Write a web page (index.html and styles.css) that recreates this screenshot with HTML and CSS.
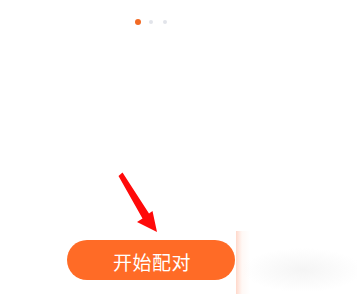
FILE: index.html
```html
<!DOCTYPE html>
<html>
<head>
<meta charset="utf-8">
<link rel="stylesheet" href="styles.css">
</head>
<body>
<div class="page">
  <div class="dots">
    <span class="dot active"></span>
    <span class="dot"></span>
    <span class="dot last"></span>
  </div>
  <div class="actions">
    <button class="start">开始配对</button>
    <div class="ghost"></div>
  </div>
  <svg class="arrow" width="357" height="294" viewBox="0 0 357 294">
    <polygon points="118.5,176 122.5,172.5 149,213.5 152.5,211 157,232 137,222 142.5,218.5" fill="#ff0a0a"/>
  </svg>
</div>
</body>
</html>
```
FILE: styles.css
```css
html, body {
  margin: 0;
  padding: 0;
  background: #ffffff;
}
.page {
  position: relative;
  width: 357px;
  height: 294px;
  display: flex;
  flex-direction: column;
  overflow: hidden;
  font-family: "Noto Sans CJK SC", "Noto Sans", sans-serif;
}
.dots {
  display: flex;
  align-items: center;
  padding-left: 135px;
  margin-top: 19px;
  height: 6px;
}
.dot {
  width: 4px;
  height: 4px;
  border-radius: 50%;
  background: #e2e4ea;
  margin-left: 8px;
}
.dot.last {
  margin-left: 10px;
}
.dot.active {
  width: 6px;
  height: 6px;
  margin-left: 0;
  background: #f26a24;
}
.actions {
  margin-top: auto;
  display: flex;
  align-items: flex-end;
  height: 63px;
}
.start {
  margin: 0 0 14px 67px;
  width: 168px;
  height: 40px;
  border: none;
  border-radius: 20px;
  background: #ff6b26;
  color: #ffffff;
  font-family: "Noto Sans CJK SC", sans-serif;
  font-size: 19px;
  line-height: 40px;
  padding: 0 0 0 2px;
  padding-top: 2px;
  letter-spacing: 0.5px;
}
.ghost {
  margin-left: 1px;
  align-self: stretch;
  flex: 1;
  background:
    linear-gradient(to right, rgba(255, 170, 140, 0.45) 0px, rgba(255, 220, 205, 0.2) 6px, rgba(255, 255, 255, 0) 14px),
    radial-gradient(ellipse 50% 35% at 55% 62%, rgba(235, 235, 235, 0.5), rgba(255, 255, 255, 0));
  background-color: #ffffff;
}
.arrow {
  position: absolute;
  left: 0;
  top: 0;
  pointer-events: none;
}
```
